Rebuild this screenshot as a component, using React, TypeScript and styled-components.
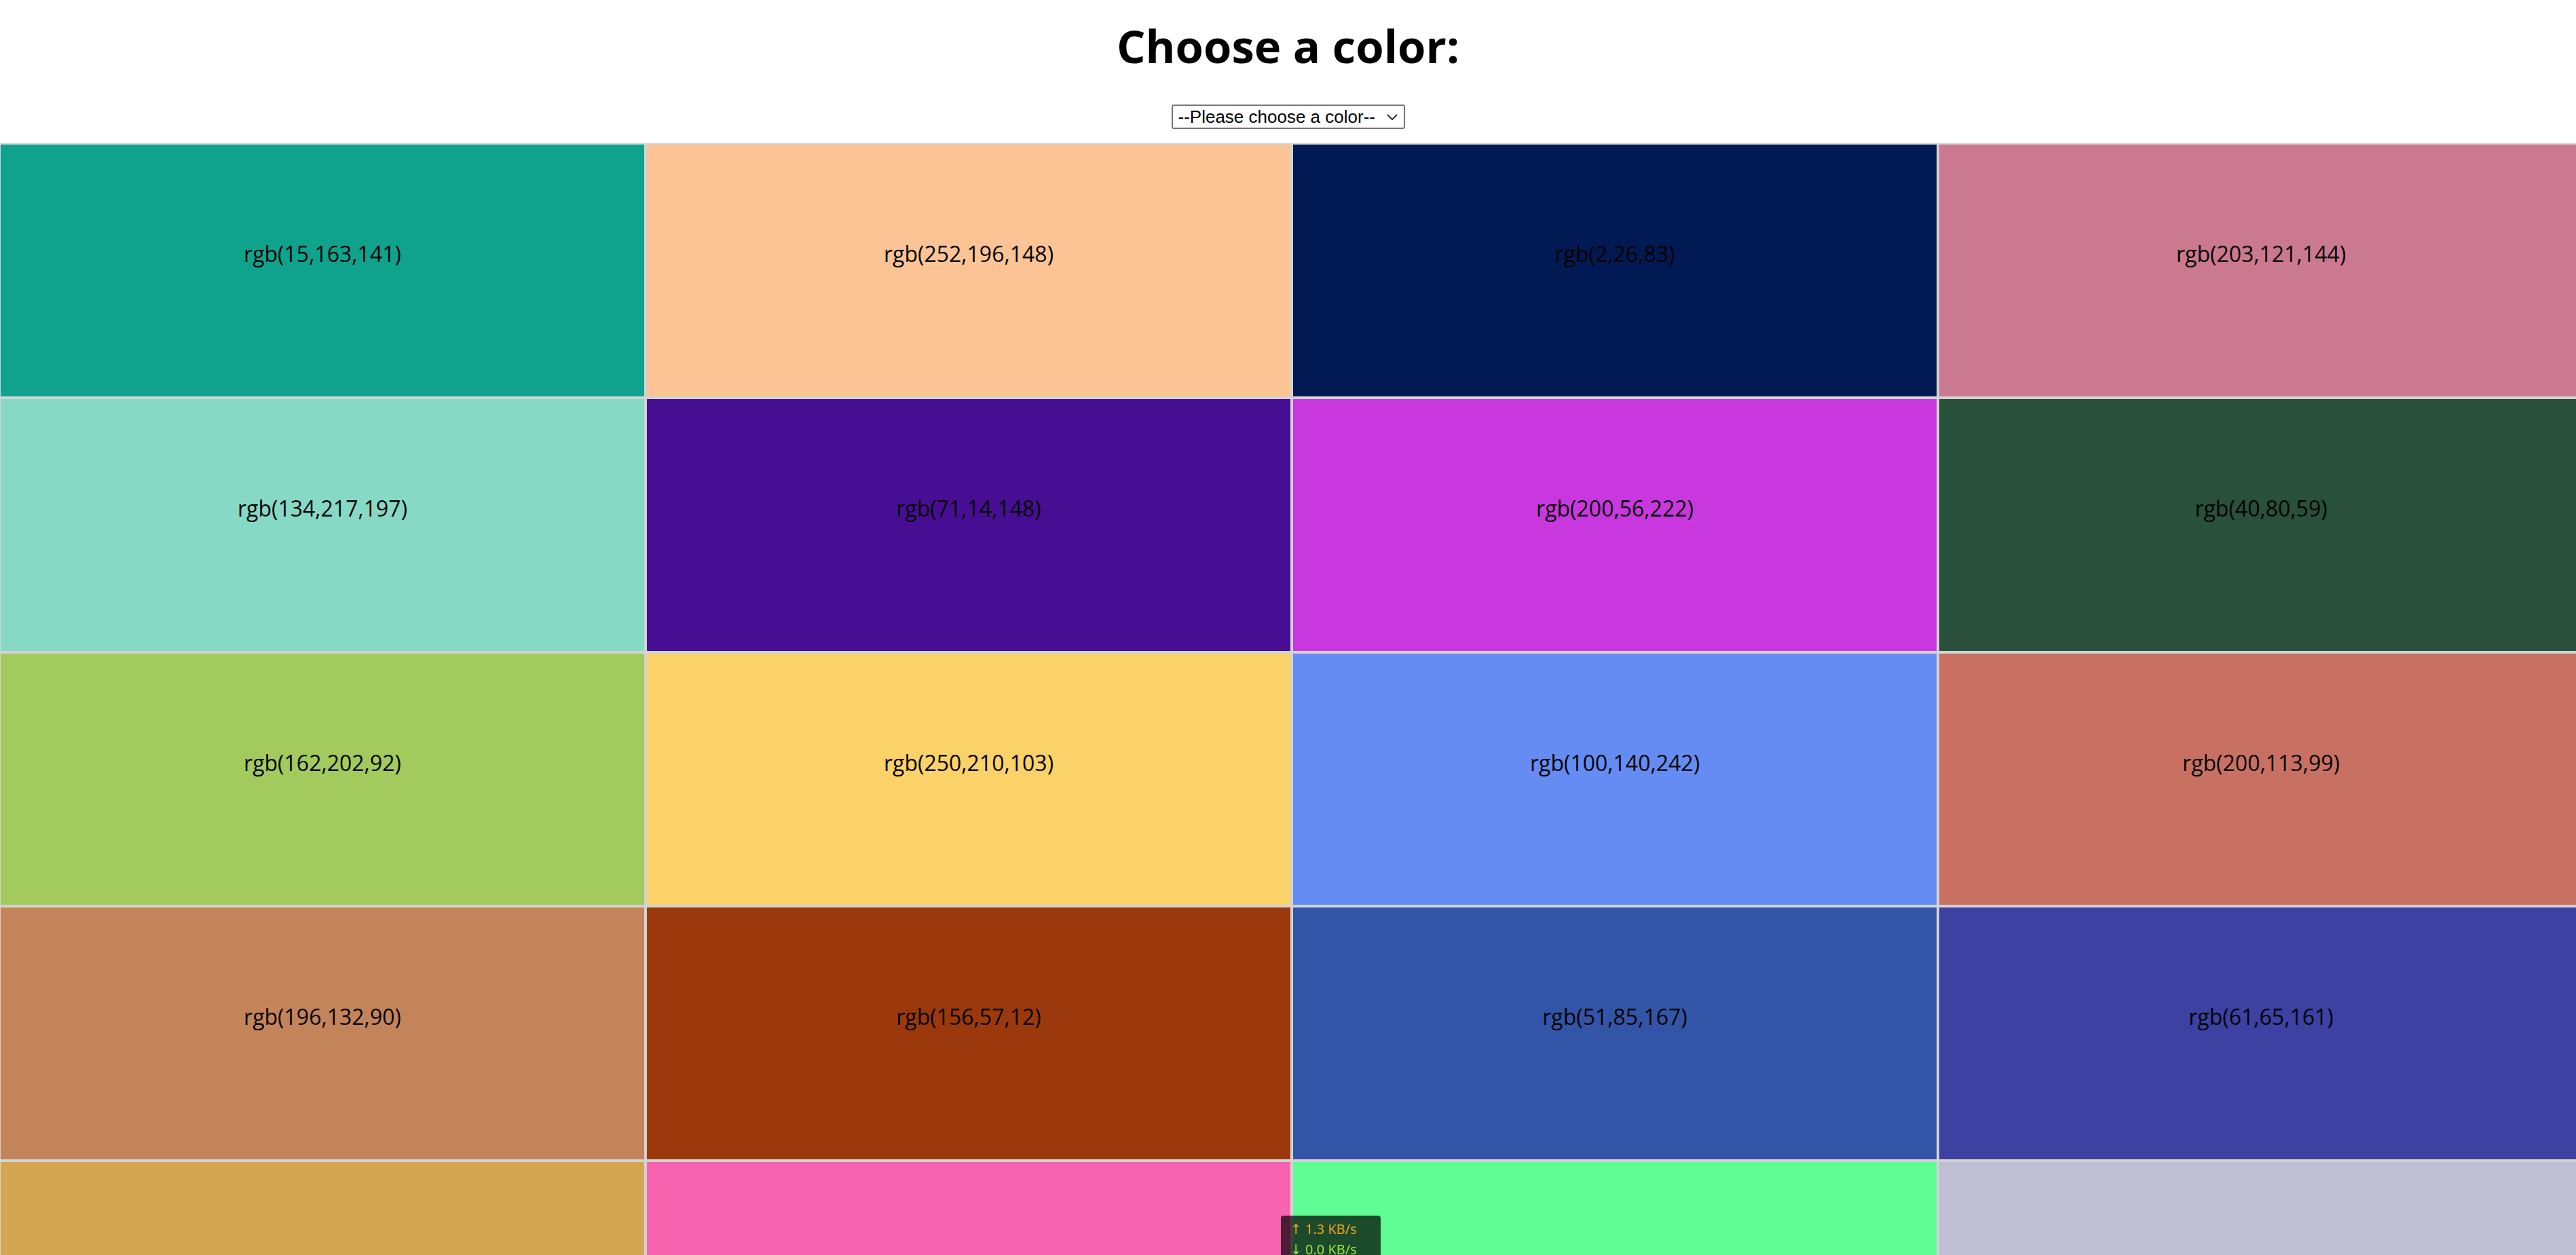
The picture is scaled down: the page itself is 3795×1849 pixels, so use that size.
import React from 'react';
import styled, { createGlobalStyle } from 'styled-components';

const colores: [number, number, number][] = [
  [15, 163, 141], [252, 196, 148], [2, 26, 83], [203, 121, 144],
  [134, 217, 197], [71, 14, 148], [200, 56, 222], [40, 80, 59],
  [162, 202, 92], [250, 210, 103], [100, 140, 242], [200, 113, 99],
  [196, 132, 90], [156, 57, 12], [51, 85, 167], [61, 65, 161],
  [212, 166, 82], [247, 99, 174], [94, 252, 147], [191, 190, 210],
];

const App: React.FC = () => {
  return (
    <>
      <GlobalStyle />
      <Pagina>
        <Cabecalho>
          <Titulo>Choose a color:</Titulo>
          <SelectWrap>
            <Select defaultValue="">
              <option value="">--Please choose a color--</option>
              {colores.map((c) => (
                <option key={c.join(',')} value={`rgb(${c.join(',')})`}>
                  rgb({c.join(',')})
                </option>
              ))}
            </Select>
            <Seta width="16" height="9" viewBox="0 0 16 9">
              <path d="M1 1 L8 8 L15 1" fill="none" stroke="#222" strokeWidth="1.8" />
            </Seta>
          </SelectWrap>
        </Cabecalho>

        <Grade>
          {colores.map((c) => (
            <Celula key={c.join(',')} $cor={`rgb(${c.join(',')})`}>
              rgb({c.join(',')})
            </Celula>
          ))}
        </Grade>
      </Pagina>

      <Rede>
        <LinhaRede $cor="#f7a21b">↑ 1.3 KB/s</LinhaRede>
        <LinhaRede $cor="#9be53c">↓ 0.0 KB/s</LinhaRede>
      </Rede>
    </>
  );
};

export default App;

const GlobalStyle = createGlobalStyle`
  html, body {
    margin: 0;
    padding: 0;
    overflow: hidden;
    background: #fff;
  }
`;

const Pagina = styled.div`
  display: flex;
  flex-direction: column;
  width: 100%;
  overflow: hidden;
`;

const Cabecalho = styled.div`
  display: flex;
  flex-direction: column;
  align-items: center;
  padding-top: 34px;
`;

const Titulo = styled.h1`
  margin: 0;
  font-family: 'Open Sans', 'Noto Sans', sans-serif;
  font-weight: 700;
  font-size: 67px;
  line-height: 1;
  color: #000;
`;

const SelectWrap = styled.div`
  position: relative;
  margin-top: 53px;
`;

const Select = styled.select`
  appearance: none;
  -webkit-appearance: none;
  display: block;
  box-sizing: border-box;
  width: 344px;
  height: 36px;
  padding: 0 0 0 8px;
  border: 2px solid #767676;
  border-radius: 3px;
  background: #fff;
  color: #000;
  font-family: 'Liberation Sans', Arial, sans-serif;
  font-size: 26px;
  outline: none;
`;

const Seta = styled.svg`
  position: absolute;
  right: 11px;
  top: 14px;
  pointer-events: none;
`;

const Grade = styled.div`
  display: grid;
  grid-template-columns: repeat(4, 952px);
  margin-top: 21px;
  margin-left: -1px;
`;

const Celula = styled.div<{ $cor: string }>`
  box-sizing: border-box;
  height: 374.75px;
  padding-top: 139px;
  border: 2px solid #d3d3d3;
  background-color: ${(p) => p.$cor};
  text-align: center;
  font-family: 'Open Sans', 'Noto Sans', sans-serif;
  font-size: 32px;
  line-height: 44px;
  color: #000;
`;

const Rede = styled.div`
  position: fixed;
  left: 1887px;
  top: 1791px;
  width: 147px;
  height: 80px;
  box-sizing: border-box;
  padding: 5px 0 0 14px;
  border-radius: 4px;
  background: rgba(0, 0, 0, 0.7);
`;

const LinhaRede = styled.div<{ $cor: string }>`
  font-family: 'Noto Sans', 'DejaVu Sans', sans-serif;
  font-size: 20px;
  line-height: 30px;
  color: ${(p) => p.$cor};
  white-space: nowrap;
`;
